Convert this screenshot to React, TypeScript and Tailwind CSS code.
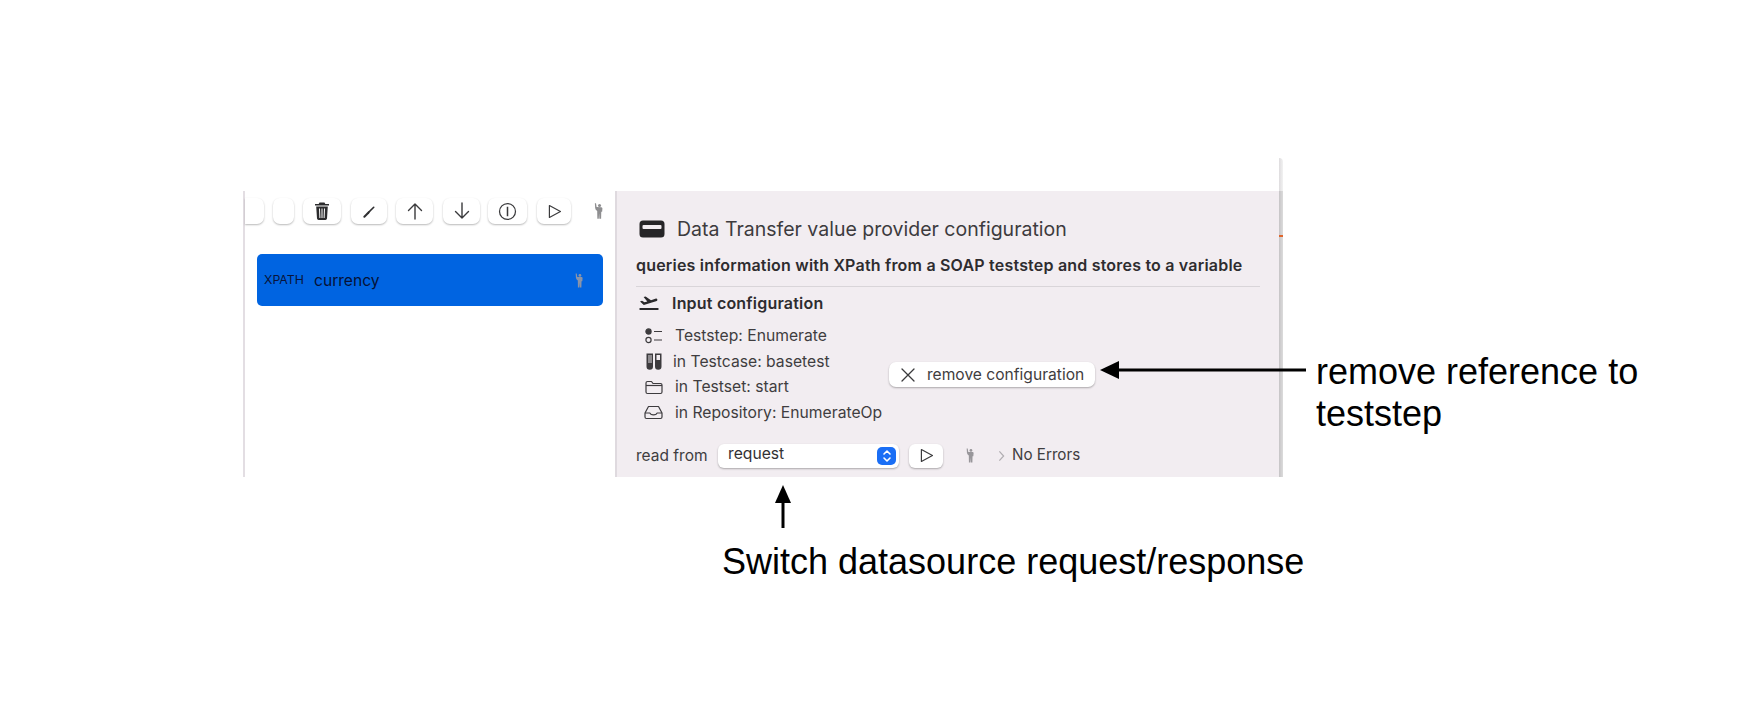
const sf = "font-['Inter','Liberation_Sans',sans-serif]";
const helv = "font-['Liberation_Sans',Arial,sans-serif]";

function Figure({ className = "" }: { className?: string }) {
  return (
    <svg viewBox="0 0 12 22" className={className} fill="currentColor">
      <circle cx="7.4" cy="3.4" r="2.1" />
      <path d="M1 0.5 L2.6 0.5 L3.4 5.6 L10 5.8 Q11.4 6 11.4 7.6 L11 12 L9.8 12 L9.6 21.5 L7.2 21.5 L6.8 14.5 L6.4 21.5 L4.4 21.5 L4.2 11 Q1.6 9.5 1.4 7 Z" />
    </svg>
  );
}

function ToolButton({ w, children, cut }: { w: string; children?: React.ReactNode; cut?: boolean }) {
  return (
    <div
      className={`${w} h-[26px] shrink-0 bg-white flex items-center justify-center text-[#3a3a3c] shadow-[0_1px_2px_rgba(0,0,0,0.28)] ${cut ? "rounded-r-[7px]" : "rounded-[7px]"}`}
    >
      {children}
    </div>
  );
}

function Stroke({ d, size = 20, sw = 1.5 }: { d: string; size?: number; sw?: number }) {
  return (
    <svg viewBox="0 0 20 20" width={size} height={size} fill="none" stroke="currentColor" strokeWidth={sw} strokeLinecap="round" strokeLinejoin="round">
      <path d={d} />
    </svg>
  );
}

function LeftPanel() {
  return (
    <div className="w-[372px] h-full border-l-2 border-[#e3dee3] bg-white flex flex-col pl-[12px] shrink-0">
      <div className="flex items-center h-[26px] mt-[7px] -ml-[12px]">
        <ToolButton w="w-[19px]" cut />
        <div className="w-[9px]" />
        <ToolButton w="w-[21px]" />
        <div className="w-[9px]" />
        <ToolButton w="w-[38px]">
          <svg viewBox="0 0 16 20" width="16" height="20" fill="#2b2b2d">
            <path d="M5.5 1.5 h5 l0.8 1.5 H15 v1.6 H1 V3 h3.7 Z" />
            <path fillRule="evenodd" d="M2.2 5.6 h11.6 l-0.8 12 a1.6 1.6 0 0 1 -1.6 1.4 H4.6 a1.6 1.6 0 0 1 -1.6 -1.4 Z M5 7.5 l0.4 9.5 h1 L6 7.5 Z M7.5 7.5 v9.5 h1 V7.5 Z M10 7.5 l-0.4 9.5 h1 l0.4 -9.5 Z" />
          </svg>
        </ToolButton>
        <div className="w-[10px]" />
        <ToolButton w="w-[36px]">
          <svg viewBox="0 0 16 16" width="15" height="15" fill="none" stroke="#2f2f31" strokeLinecap="round">
            <path d="M2.5 13.5 L7 9" strokeWidth="2.2" />
            <path d="M7 9 L12.5 3.5" strokeWidth="1.7" />
          </svg>
        </ToolButton>
        <div className="w-[9px]" />
        <ToolButton w="w-[37px]">
          <Stroke d="M10 18 V3 M3.5 9.5 L10 3 L16.5 9.5" size={20} sw={1.4} />
        </ToolButton>
        <div className="w-[10px]" />
        <ToolButton w="w-[37px]">
          <Stroke d="M10 2 V17 M3.5 10.5 L10 17 L16.5 10.5" size={20} sw={1.4} />
        </ToolButton>
        <div className="w-[8px]" />
        <ToolButton w="w-[39px]">
          <svg viewBox="0 0 20 20" width="19" height="19" fill="none" stroke="currentColor" strokeWidth="1.3">
            <circle cx="10" cy="10" r="8.4" />
            <path d="M10 5 V15" strokeWidth="1.6" />
          </svg>
        </ToolButton>
        <div className="w-[10px]" />
        <ToolButton w="w-[34px]">
          <Stroke d="M4 3 L17 10 L4 17 Z" size={17} sw={1.4} />
        </ToolButton>
        <Figure className="w-[9px] h-[16px] ml-[23px] text-[#8e8e90]" />
      </div>
      <div className="mt-[30px] w-[346px] h-[52px] rounded-[5px] bg-[#0064e1] flex items-center">
        <span className={`${sf} text-[12.3px] text-[#08143a] ml-[7px] w-[50px] mt-[1px]`}>XPATH</span>
        <span className={`${sf} text-[15.6px] text-[#061236] mt-[1px]`}>currency</span>
        <Figure className="w-[8px] h-[15px] ml-auto mr-[20px] text-[#8a94a8]" />
      </div>
    </div>
  );
}

function InputRow({ icon, label, gap }: { icon: React.ReactNode; label: string; gap: string }) {
  return (
    <div className="flex items-center h-[25.7px]">
      <div className="w-[19px] flex justify-center text-[#3d3b3e] shrink-0">{icon}</div>
      <span className={`${gap} ${sf} text-[15.7px] text-[#3f3d40] whitespace-nowrap`}>{label}</span>
    </div>
  );
}

function RightPanel() {
  return (
    <div className={`flex-1 h-full bg-[#f2edf1] border-l-2 border-[#dfdadf] pl-[19px] pr-[19px] ${sf}`}>
      <div className="flex items-center h-[20px] mt-[28px] ml-[3px]">
        <svg viewBox="0 0 26 18" width="26" height="18" className="shrink-0">
          <path fillRule="evenodd" fill="#262527" d="M4 0.5 H22 a3.5 3.5 0 0 1 3.5 3.5 V14 a3.5 3.5 0 0 1 -3.5 3.5 H4 A3.5 3.5 0 0 1 0.5 14 V4 A3.5 3.5 0 0 1 4 0.5 Z M4.5 5 a1 1 0 0 0 -1 1 v2 a1 1 0 0 0 1 1 H21.5 a1 1 0 0 0 1 -1 V6 a1 1 0 0 0 -1 -1 Z" />
        </svg>
        <span className="ml-[12px] text-[19.5px] text-[#3d3b3e] whitespace-nowrap mt-[2px]">Data Transfer value provider configuration</span>
      </div>
      <div className="mt-[16px] text-[16px] tracking-[0.2px] font-semibold text-[#2e2c2f] whitespace-nowrap h-[20px] leading-[20px]">
        queries information with XPath from a SOAP teststep and stores to a variable
      </div>
      <div className="mt-[11px] h-px w-[624px] bg-[#d9d5d9]" />
      <div className="flex items-center h-[20px] mt-[6px] ml-[3px]">
        <svg viewBox="0 0 20 16" width="20" height="16" fill="#2a292b" className="shrink-0">
          <path d="M1 6.5 L3 5.8 L5.5 7.3 L8.3 6.5 L4.6 2 L6.6 1.4 L12 5.2 L17 3.6 A1.3 1.3 0 0 1 17.8 6 L4.8 10 L1 6.5 Z" />
          <rect x="0.5" y="13" width="19" height="2" rx="0.5" />
        </svg>
        <span className="ml-[13px] text-[16px] tracking-[0.2px] font-semibold text-[#2e2c2f] whitespace-nowrap">Input configuration</span>
      </div>
      <div className="mt-[10px] ml-[8px] flex flex-col">
        <InputRow
          gap="ml-[12px]"
          label="Teststep: Enumerate"
          icon={
            <svg viewBox="0 0 18 16" width="18" height="16" fill="none" stroke="currentColor" strokeWidth="1.2">
              <circle cx="3.5" cy="3.5" r="2.6" fill="currentColor" />
              <circle cx="3.5" cy="12" r="2.6" />
              <path d="M9 3.5 H17 M9 12 H17" />
            </svg>
          }
        />
        <InputRow
          gap="ml-[10px]"
          label="in Testcase: basetest"
          icon={
            <svg viewBox="0 0 16 17" width="16" height="17" fill="currentColor">
              <path d="M0.5 0.5 H7 V13.5 A3.25 3.25 0 0 1 0.5 13.5 Z" />
              <path fillRule="evenodd" d="M9 0.5 H15.5 V13.5 A3.25 3.25 0 0 1 9 13.5 Z M10.5 2 V7 H14 V2 Z" />
              <path d="M3 2 V10 M5 2 V10" stroke="#f2edf1" strokeWidth="0.9" />
            </svg>
          }
        />
        <InputRow
          gap="ml-[12px]"
          label="in Testset: start"
          icon={
            <svg viewBox="0 0 18 15" width="18" height="15" fill="none" stroke="currentColor" strokeWidth="1.2" strokeLinejoin="round">
              <path d="M1 3 A1.5 1.5 0 0 1 2.5 1.5 H6.5 L8 3.5 H15.5 A1.5 1.5 0 0 1 17 5 V12 A1.5 1.5 0 0 1 15.5 13.5 H2.5 A1.5 1.5 0 0 1 1 12 Z" />
              <path d="M1 5.5 H17" />
            </svg>
          }
        />
        <InputRow
          gap="ml-[12px]"
          label="in Repository: EnumerateOp"
          icon={
            <svg viewBox="0 0 19 15" width="19" height="15" fill="none" stroke="currentColor" strokeWidth="1.2" strokeLinejoin="round">
              <path d="M4.5 1.5 H14.5 L18 8 V12 A1.5 1.5 0 0 1 16.5 13.5 H2.5 A1.5 1.5 0 0 1 1 12 V8 Z" />
              <path d="M1 8 H6 C6.5 10.5 12.5 10.5 13 8 H18" />
            </svg>
          }
        />
      </div>
      <div className="flex items-center h-[24px] mt-[18px]">
        <span className="text-[15.5px] text-[#3f3d40] w-[82px] whitespace-nowrap">read from</span>
        <div className="w-[181px] h-[24px] bg-white rounded-[6px] shadow-[0_1px_2px_rgba(0,0,0,0.3)] flex items-center pl-[10px] pr-[3px]">
          <span className="text-[15.7px] text-[#333134] leading-none -mt-[3px]">request</span>
          <div className="ml-auto w-[19px] h-[18px] rounded-[5px] bg-[#1a6ef5] flex items-center justify-center">
            <svg viewBox="0 0 10 14" width="10" height="14" fill="none" stroke="white" strokeWidth="1.6" strokeLinecap="round" strokeLinejoin="round">
              <path d="M2 5 L5 2 L8 5 M2 9 L5 12 L8 9" />
            </svg>
          </div>
        </div>
        <div className="ml-[10px] w-[34px] h-[24px] bg-white rounded-[6px] shadow-[0_1px_2px_rgba(0,0,0,0.3)] flex items-center justify-center text-[#3a3a3c]">
          <Stroke d="M4 3 L17 10 L4 17 Z" size={17} sw={1.4} />
        </div>
        <Figure className="w-[8px] h-[15px] ml-[23px] text-[#98969a]" />
        <svg viewBox="0 0 8 14" width="7" height="12" fill="none" stroke="#b0adb1" strokeWidth="1.4" className="ml-[24px]">
          <path d="M1.5 1.5 L6.5 7 L1.5 12.5" />
        </svg>
        <span className="ml-[7px] text-[15.2px] text-[#3f3d40] whitespace-nowrap">No Errors</span>
      </div>
    </div>
  );
}

export default function App() {
  return (
    <div className="relative w-[1742px] h-[712px] overflow-hidden bg-white">
      <div className="pt-[158px] pl-[243px]">
        <div className="flex h-[319px] w-[1040px]">
          <div className="flex-1 flex flex-col pt-[33px]">
            <div className="flex h-[286px]">
              <LeftPanel />
              <RightPanel />
            </div>
          </div>
          <div className="relative w-[4px] h-full flex flex-col">
            <div className="h-[33px] bg-gradient-to-r from-[#dedcde] to-[#f2f2f2] rounded-tr-[6px]" />
            <div className="flex-1 bg-gradient-to-r from-[#c6c4c6] to-[#dcdcdc]" />
            <div className="absolute left-0 right-0 top-[77px] h-[2px] bg-[#e0662c]" />
          </div>
        </div>
      </div>

      <div className={`absolute left-[889px] top-[362px] w-[206px] h-[25px] bg-white rounded-[7px] shadow-[0_1px_2px_rgba(0,0,0,0.3)] flex items-center pl-[12px] ${sf}`}>
        <svg viewBox="0 0 14 14" width="14" height="14" fill="none" stroke="#3a3a3c" strokeWidth="1.3" strokeLinecap="round">
          <path d="M1 1 L13 13 M13 1 L1 13" />
        </svg>
        <span className="ml-[12px] text-[15.6px] text-[#3f3d40] whitespace-nowrap">remove configuration</span>
      </div>

      <svg className="absolute left-[1098px] top-[359px]" width="210" height="22" viewBox="0 0 210 22">
        <path d="M2 11 L21 2 V20 Z" fill="black" />
        <path d="M20 11 H208" stroke="black" strokeWidth="3" />
      </svg>
      <svg className="absolute left-[773px] top-[483px]" width="20" height="46" viewBox="0 0 20 46">
        <path d="M10 2 L18 20 H2 Z" fill="black" />
        <path d="M10 18 V45" stroke="black" strokeWidth="3" />
      </svg>

      <div className={`absolute left-[1316px] top-[351px] w-[340px] text-[36px] leading-[42px] text-black ${helv}`}>
        remove reference to<br />teststep
      </div>
      <div className={`absolute left-[722px] top-[541px] text-[36px] leading-[42px] text-black whitespace-nowrap ${helv}`}>
        Switch datasource request/response
      </div>
    </div>
  );
}
